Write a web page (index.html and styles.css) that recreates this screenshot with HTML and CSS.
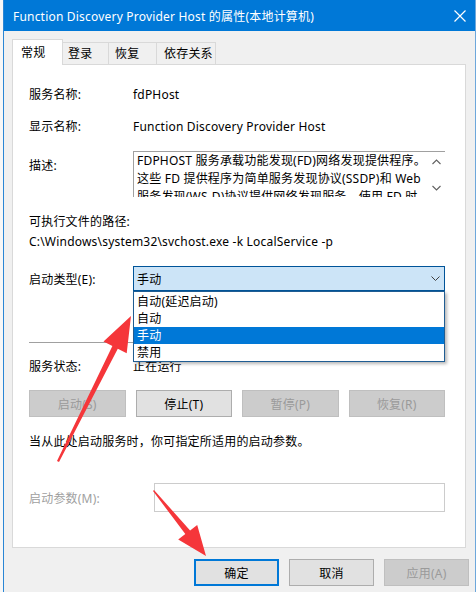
FILE: index.html
```html
<!DOCTYPE html>
<html lang="zh-CN">
<head>
	<meta charset="UTF-8">
	<title>服务属性</title>
	<link rel="stylesheet" href="styles.css">
</head>
<body>
	<div class="screen">
		<div class="behind"></div>
		<div class="window">
			<div class="titlebar">
				<span class="title">Function Discovery Provider Host 的属性(本地计算机)</span>
				<svg class="close" width="12" height="12" viewBox="0 0 12 12"><path d="M0.5 0.5L11.5 11.5M11.5 0.5L0.5 11.5" stroke="#fff" stroke-width="1.2"/></svg>
			</div>
			<div class="body">
				<div class="tabs">
					<div class="tab active t1">常规</div>
					<div class="tab t2">登录</div>
					<div class="tab t3">恢复</div>
					<div class="tab t4">依存关系</div>
				</div>
				<div class="panel">
					<div class="row">
						<span class="label">服务名称:</span>
						<span class="value">fdPHost</span>
					</div>
					<div class="row gap12">
						<span class="label">显示名称:</span>
						<span class="value">Function Discovery Provider Host</span>
					</div>
					<div class="row desc-row gap15">
						<span class="label">描述:</span>
						<div class="desc">
							<div class="desc-text">
								<div>FDPHOST 服务承载功能发现(FD)网络发现提供程序。</div>
								<div>这些 FD 提供程序为简单服务发现协议(SSDP)和 Web</div>
								<div>服务发现(WS-D)协议提供网络发现服务。使用 FD 时</div>
							</div>
							<div class="scroll">
								<svg width="9" height="6" viewBox="0 0 9 6"><path d="M0.5 5L4.5 1L8.5 5" fill="none" stroke="#606060" stroke-width="1.1"/></svg>
								<svg width="9" height="6" viewBox="0 0 9 6"><path d="M0.5 1L4.5 5L8.5 1" fill="none" stroke="#606060" stroke-width="1.1"/></svg>
							</div>
						</div>
					</div>
					<div class="line gap15">可执行文件的路径:</div>
					<div class="line">C:\Windows\system32\svchost.exe -k LocalService -p</div>
					<div class="row type-row gap14">
						<span class="label">启动类型(E):</span>
						<div class="combo">
							<span>手动</span>
							<svg width="9" height="5" viewBox="0 0 9 5"><path d="M0.5 0.5L4.5 4.5L8.5 0.5" fill="none" stroke="#404040" stroke-width="1"/></svg>
							<ul class="options">
								<li>自动(延迟启动)</li>
								<li>自动</li>
								<li class="selected">手动</li>
								<li>禁用</li>
							</ul>
						</div>
					</div>
					<div class="sep"></div>
					<div class="row gap13">
						<span class="label">服务状态:</span>
						<span class="value">正在运行</span>
					</div>
					<div class="btn-grid gap14">
						<button class="btn" disabled>启动(S)</button>
						<button class="btn">停止(T)</button>
						<button class="btn" disabled>暂停(P)</button>
						<button class="btn" disabled>恢复(R)</button>
					</div>
					<div class="line gap15">当从此处启动服务时，你可指定所适用的启动参数。</div>
					<div class="row param-row">
						<span class="label muted">启动参数(M):</span>
						<div class="param-input"></div>
					</div>
				</div>
				<div class="actions">
					<button class="btn act default">确定</button>
					<button class="btn act">取消</button>
					<button class="btn act" disabled>应用(A)</button>
				</div>
			</div>
		</div>
		<svg class="marks" width="476" height="592" viewBox="0 0 476 592">
			<polygon fill="#f5363a" points="57,461 112.4,345.9 103.5,341.4 131,316 126.7,353.2 117.8,348.7 59,462"/>
			<polygon fill="#f5363a" points="154,490 190.1,530.5 197.2,525 206,556 178.2,539.6 185.3,534.1 153,491"/>
			<path d="M311.5 292.5L311.5 308.5L315.3 304.8L318.3 311.6L320.8 310.5L317.9 303.8L323 303.8Z" fill="#fff" stroke="#000" stroke-width="1"/>
		</svg>
	</div>
</body>
</html>
```
FILE: styles.css
```css
*{
	box-sizing: border-box;
}
body{
	margin: 0;
	font-family: "Noto Sans", "Noto Sans CJK SC", sans-serif;
	font-size: 12px;
	letter-spacing: 0.2px;
	color: #000;
}
.screen{
	width: 476px;
	height: 592px;
	position: relative;
	display: flex;
	overflow: hidden;
	background: #f0f0f0;
}
.behind{
	width: 3px;
	background: #f7f7f7;
}
.window{
	flex: 1;
	display: flex;
	flex-direction: column;
	border-left: 1px solid #2a86d5;
	border-right: 1px solid #6da7db;
	background: #f0f0f0;
}
.titlebar{
	height: 31px;
	background: #0078d7;
	color: #fff;
	display: flex;
	align-items: center;
	justify-content: space-between;
	padding: 0 9px 0 9px;
}
.close{
	margin-right: 0;
}
.body{
	padding: 8px 7px 0 8px;
}
.tabs{
	display: flex;
	align-items: flex-end;
	height: 25px;
}
.tab{
	height: 22px;
	line-height: 21px;
	border: 1px solid #d9d9d9;
	border-bottom: none;
	border-left: none;
	background: #f0f0f0;
	padding-left: 5px;
}
.tab.active{
	height: 26px;
	line-height: 26px;
	margin-bottom: -1px;
	background: #fff;
	border-left: 1px solid #d9d9d9;
	padding-left: 8px;
	position: relative;
	z-index: 1;
}
.t1{ width: 51px; }
.t2{ width: 46px; }
.t3{ width: 48px; padding-left: 6px; }
.t4{ width: 59px; padding-left: 7px; }
.panel{
	width: 454px;
	height: 484px;
	background: #fff;
	border: 1px solid #d9d9d9;
	padding: 19px 20px 0 16px;
}
.row{
	display: flex;
	align-items: center;
	height: 20px;
}
.label{
	width: 104px;
	flex: none;
}
.muted{
	color: #a0a0a0;
}
.line{
	height: 20px;
	line-height: 20px;
	white-space: nowrap;
}
.gap12{ margin-top: 12px; }
.gap13{ margin-top: 13px; }
.gap14{ margin-top: 14px; }
.gap15{ margin-top: 15px; }
.desc-row{
	height: 46px;
	align-items: flex-start;
}
.desc-row .label{
	line-height: 20px;
	padding-top: 5px;
}
.desc{
	width: 312px;
	height: 46px;
	border-top: 1px solid #a0a0a0;
	border-left: 1px solid #a0a0a0;
	display: flex;
	overflow: hidden;
}
.desc-text{
	flex: 1;
	padding-left: 3px;
	line-height: 18px;
	white-space: nowrap;
	overflow: hidden;
}
.scroll{
	width: 17px;
	display: flex;
	flex-direction: column;
	align-items: center;
	justify-content: space-between;
	padding: 7px 0 6px;
}
.type-row{
	height: 25px;
}
.combo{
	position: relative;
	width: 312px;
	height: 25px;
	background: #cce4f7;
	border: 1px solid #005499;
	display: flex;
	align-items: center;
	justify-content: space-between;
	padding: 0 4px 0 3px;
}
.options{
	position: absolute;
	top: 24px;
	left: -1px;
	width: 312px;
	height: 71px;
	margin: 0;
	padding: 1px 0 0;
	list-style: none;
	background: #fff;
	border: 1px solid #1f5d93;
	box-shadow: 2px 2px 3px rgba(0, 0, 0, 0.28);
	z-index: 2;
}
.options li{
	height: 17px;
	line-height: 17px;
	padding-left: 3px;
}
.options .selected{
	background: #0078d7;
	color: #fff;
}
.sep{
	margin-top: 51px;
	height: 1px;
	background: #a0a0a0;
}
.btn-grid{
	display: grid;
	grid-template-columns: repeat(4, 1fr);
	gap: 10px;
	height: 27px;
}
.btn{
	font-family: inherit;
	font-size: 12px;
	letter-spacing: inherit;
	height: 27px;
	background: #e1e1e1;
	border: 1px solid #adadad;
	color: #000;
	padding: 0;
}
.btn:disabled{
	background: #cccccc;
	border-color: #bfbfbf;
	color: #9a9a9a;
}
.param-row{
	margin-top: 31px;
	height: 29px;
}
.param-row .label{
	width: 125px;
}
.param-input{
	width: 291px;
	height: 29px;
	border: 1px solid #cccccc;
}
.actions{
	display: flex;
	justify-content: flex-end;
	gap: 10px;
	margin-top: 11px;
	margin-right: -1px;
}
.act{
	width: 85px;
}
.default{
	border: 2px solid #0078d7;
}
.marks{
	position: absolute;
	left: 0;
	top: 0;
	pointer-events: none;
}
```
